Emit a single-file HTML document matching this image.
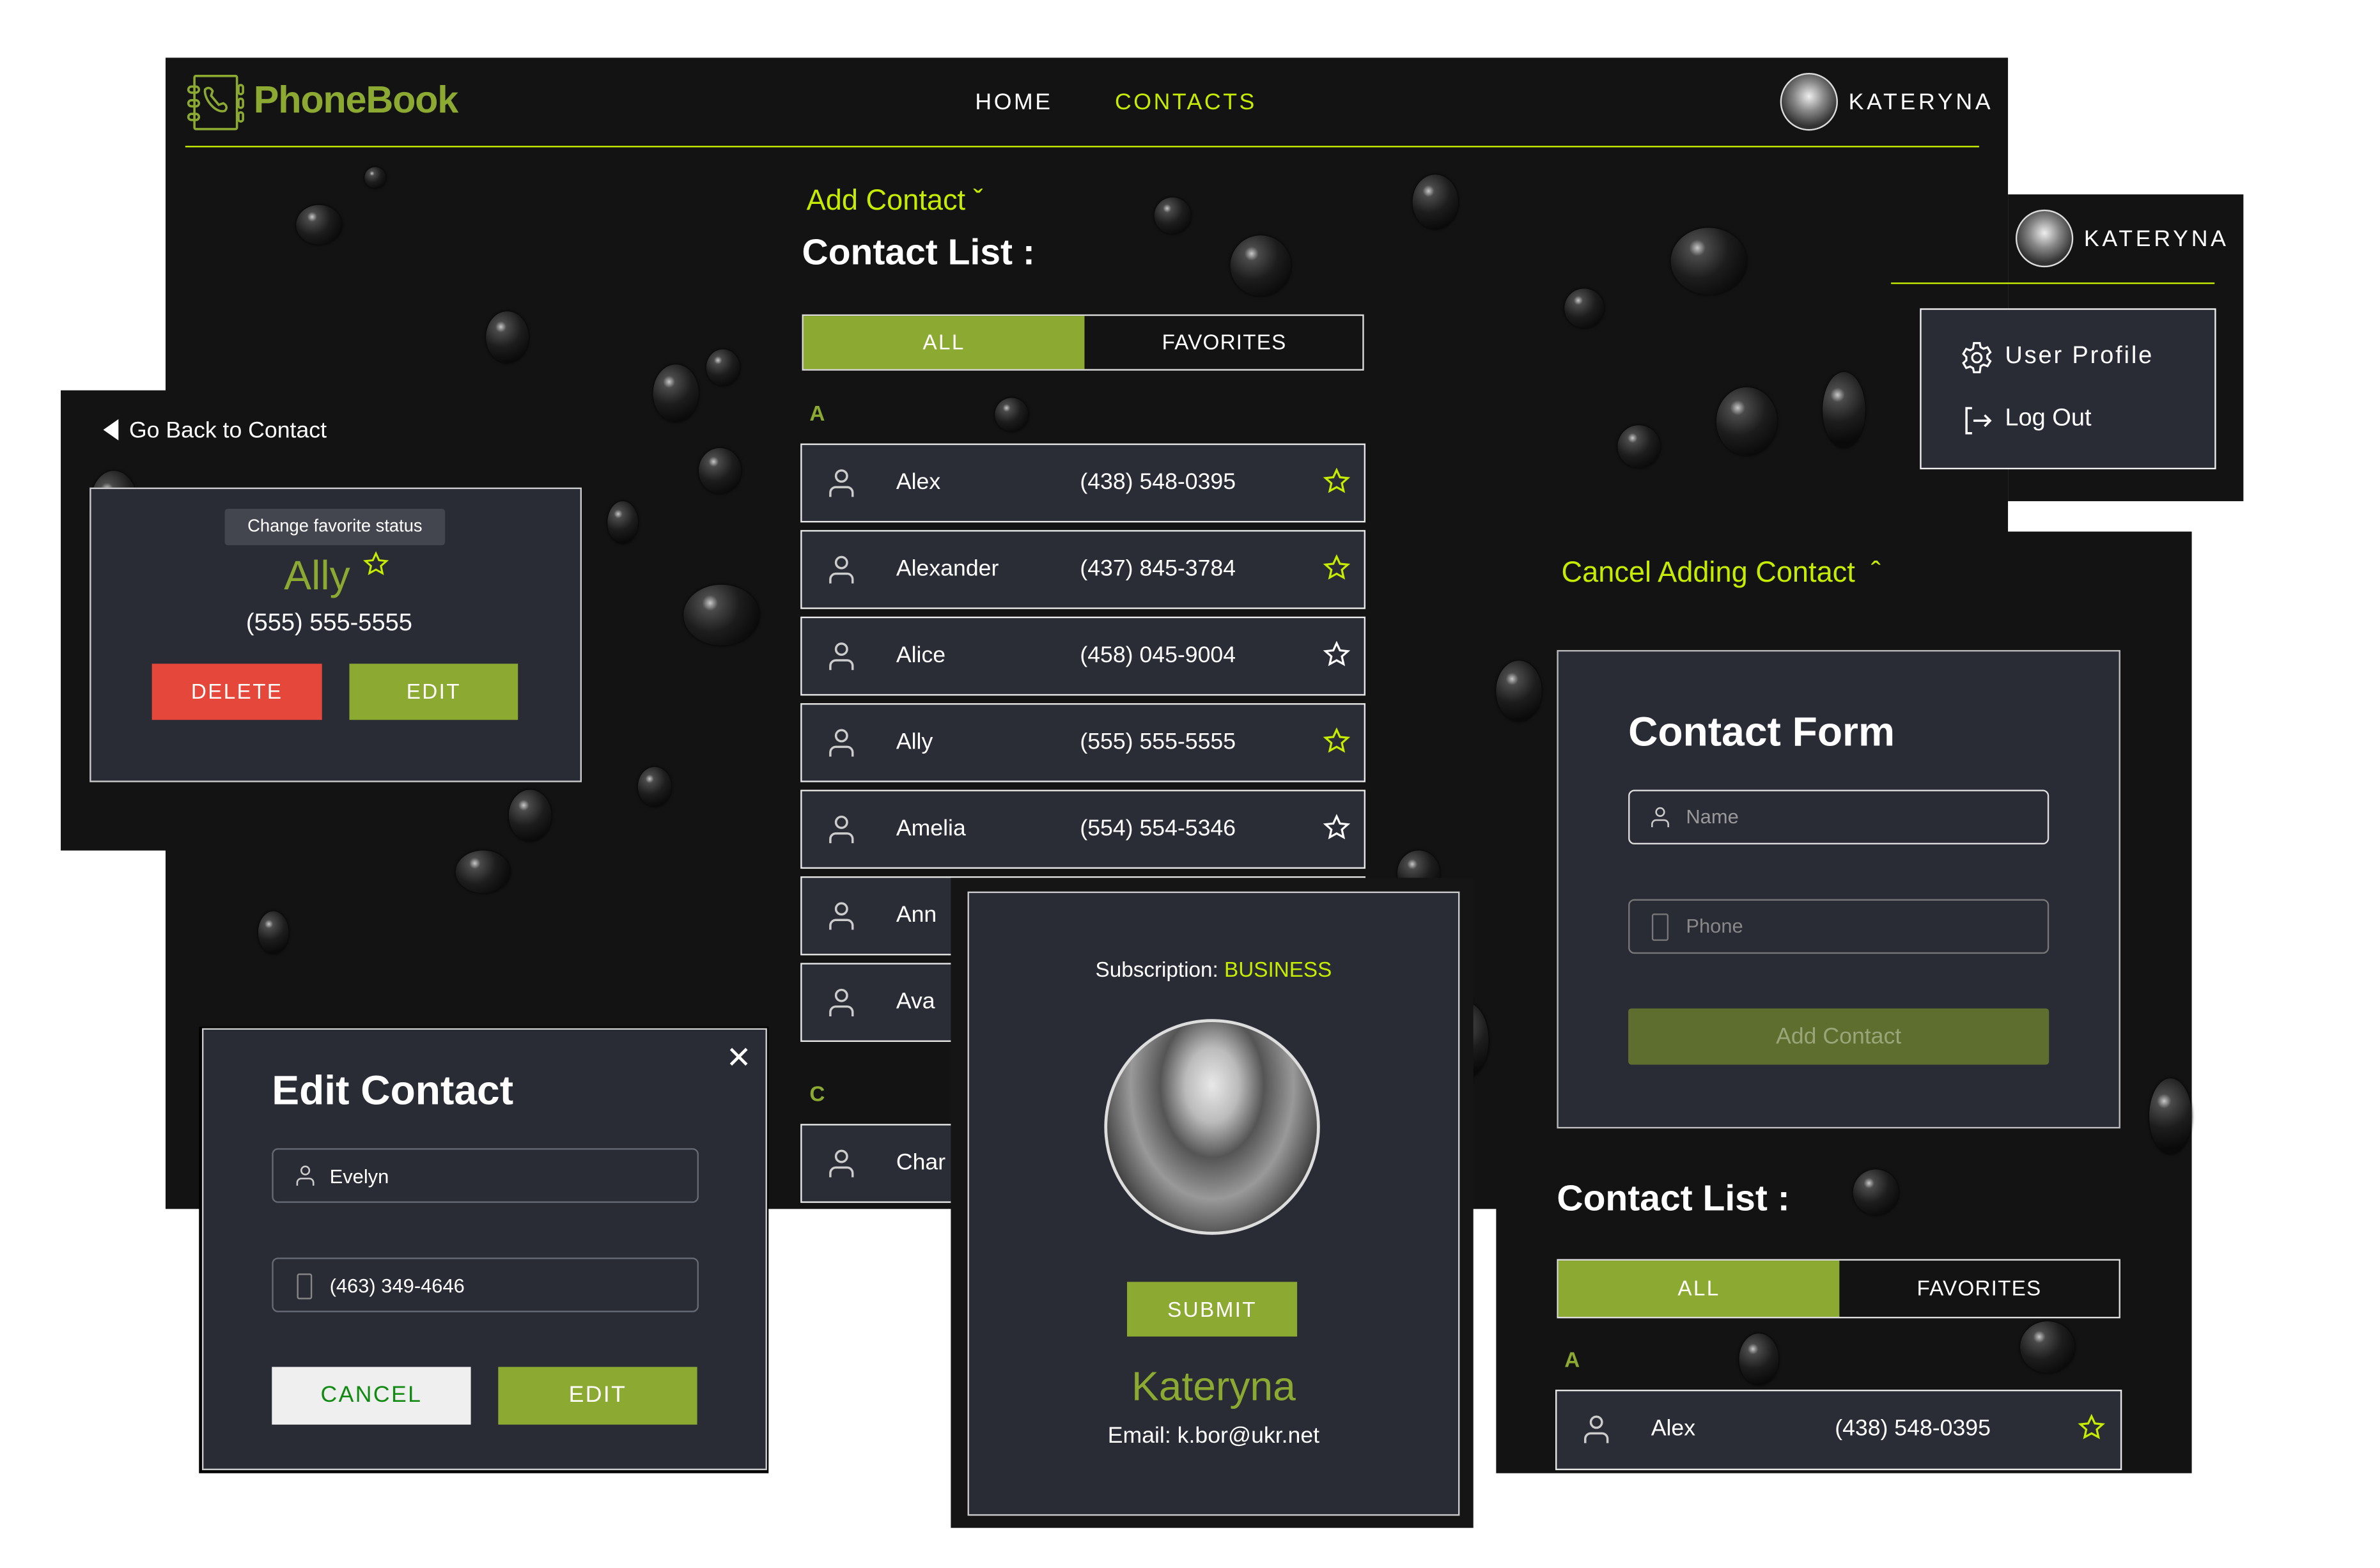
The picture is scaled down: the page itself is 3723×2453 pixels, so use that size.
<!DOCTYPE html>
<html><head><meta charset="utf-8"><style>
html,body{margin:0;padding:0;background:#fff;overflow:hidden}
body{width:3723px;height:2453px;position:relative}
#s{position:absolute;left:0;top:0;width:1570px;height:1035px;transform:scale(2.376);transform-origin:0 0;font-family:"Liberation Sans","DejaVu Sans",sans-serif;color:#fff}
.a{position:absolute}
.bg{background:#131313}
.card{background:#292b35;border:1px solid #d8d8d8;box-sizing:border-box}
.row{position:absolute;left:527px;width:372px;height:52px;background:#2a2c36;border:1px solid #e8e8e8;box-sizing:border-box;font-size:15px}
.row .n{position:absolute;left:62px;top:16px}
.row .p{position:absolute;left:183px;top:16px}
.row svg.u{position:absolute;left:15px;top:14px}
.row svg.st{position:absolute;left:343px;top:15px}
.lime{color:#c6ec00}
.btn{position:absolute;text-align:center;font-size:14px;letter-spacing:1px}
.drop{position:absolute;border-radius:50%;background:radial-gradient(circle at 35% 30%,#c8c8c8 0,#4a4a4a 12%,#1d1d1d 45%,#0a0a0a 80%);box-shadow:0 0 2px #000}
.inp{position:absolute;border:1px solid #666a74;border-radius:4px;box-sizing:border-box;font-size:13px}
</style></head><body><div id="s">

<div class="a bg" style="left:109px;top:38px;width:1213px;height:758px"></div>
<div class="a bg" style="left:1322px;top:128px;width:155px;height:202px"></div>
<div class="a bg" style="left:985px;top:350px;width:458px;height:620px"></div>
<div class="a bg" style="left:40px;top:257px;width:343px;height:303px"></div>

<div class="drop" style="left:195px;top:135px;width:30px;height:26px"></div>
<div class="drop" style="left:320px;top:205px;width:28px;height:34px"></div>
<div class="drop" style="left:430px;top:240px;width:30px;height:38px"></div>
<div class="drop" style="left:460px;top:295px;width:28px;height:30px"></div>
<div class="drop" style="left:450px;top:385px;width:50px;height:40px"></div>
<div class="drop" style="left:400px;top:330px;width:20px;height:28px"></div>
<div class="drop" style="left:335px;top:520px;width:28px;height:34px"></div>
<div class="drop" style="left:240px;top:110px;width:14px;height:14px"></div>
<div class="drop" style="left:465px;top:230px;width:22px;height:24px"></div>
<div class="drop" style="left:655px;top:262px;width:22px;height:22px"></div>
<div class="drop" style="left:760px;top:130px;width:24px;height:24px"></div>
<div class="drop" style="left:810px;top:155px;width:40px;height:40px"></div>
<div class="drop" style="left:930px;top:115px;width:30px;height:36px"></div>
<div class="drop" style="left:1100px;top:150px;width:50px;height:44px"></div>
<div class="drop" style="left:1030px;top:190px;width:26px;height:26px"></div>
<div class="drop" style="left:1130px;top:255px;width:40px;height:45px"></div>
<div class="drop" style="left:1200px;top:245px;width:28px;height:50px"></div>
<div class="drop" style="left:1065px;top:280px;width:28px;height:28px"></div>
<div class="drop" style="left:1125px;top:520px;width:28px;height:30px"></div>
<div class="drop" style="left:985px;top:435px;width:30px;height:40px"></div>
<div class="drop" style="left:1415px;top:710px;width:28px;height:50px"></div>
<div class="drop" style="left:1145px;top:878px;width:26px;height:34px"></div>
<div class="drop" style="left:1330px;top:870px;width:36px;height:34px"></div>
<div class="drop" style="left:1220px;top:770px;width:30px;height:30px"></div>
<div class="drop" style="left:950px;top:660px;width:30px;height:50px"></div>
<div class="drop" style="left:920px;top:560px;width:28px;height:30px"></div>
<div class="drop" style="left:420px;top:505px;width:22px;height:26px"></div>
<div class="drop" style="left:300px;top:560px;width:36px;height:28px"></div>
<div class="drop" style="left:170px;top:600px;width:20px;height:28px"></div>
<div class="drop" style="left:60px;top:310px;width:30px;height:40px"></div>

<svg class="a" style="left:122px;top:48px" width="40" height="40" viewBox="0 0 40 40" fill="none" stroke="#8caa32" stroke-width="1.5"><rect x="6" y="2" width="28" height="35" rx="1"/><rect x="2" y="9" width="7" height="4" rx="2"/><rect x="2" y="18" width="7" height="4" rx="2"/><rect x="2" y="27" width="7" height="4" rx="2"/><rect x="35" y="8" width="3" height="6" rx="1.5"/><rect x="35" y="17" width="3" height="6" rx="1.5"/><rect x="35" y="26" width="3" height="6" rx="1.5"/><path d="M13 11c2-2 4-1 5 1l-1 3 5 6 3-1c2 1 3 3 1 5-6 2-14-8-13-14z"/></svg>
<div class="a" style="left:167px;top:52px;font-size:25px;font-weight:bold;color:#8caa32;letter-spacing:-0.5px">PhoneBook</div>
<div class="a" style="left:642px;top:59px;font-size:15px;letter-spacing:1.5px">HOME</div>
<div class="a lime" style="left:734px;top:59px;font-size:15px;letter-spacing:1.5px">CONTACTS</div>
<div class="a" style="left:1172px;top:48px;width:36px;height:36px;border-radius:50%;background:radial-gradient(circle at 50% 40%,#eee 0,#888 35%,#333 70%);border:1px solid #ddd"></div>
<div class="a" style="left:1217px;top:59px;font-size:15px;letter-spacing:2px">KATERYNA</div>
<div class="a" style="left:122px;top:96px;width:1181px;height:1px;background:#c6ec00"></div>

<div class="a lime" style="left:531px;top:122px;font-size:19px">Add Contact &#711;</div>
<div class="a" style="left:528px;top:153px;font-size:24px;font-weight:bold">Contact List :</div>
<div class="a" style="left:528px;top:207px;width:370px;height:37px;border:1px solid #ddd;box-sizing:border-box;background:#131313"></div>
<div class="btn" style="left:529px;top:208px;width:185px;height:35px;line-height:35px;background:#8caa32">ALL</div>
<div class="btn" style="left:714px;top:208px;width:184px;height:35px;line-height:35px;letter-spacing:0.5px">FAVORITES</div>
<div class="a" style="left:533px;top:264px;font-size:14px;font-weight:bold;color:#8caa32">A</div>

<svg width="0" height="0" style="position:absolute"><defs>
<symbol id="usr" viewBox="0 0 24 24"><circle cx="12" cy="7" r="4" fill="none" stroke="#ccc" stroke-width="1.6"/><path d="M4 22v-3a4 4 0 0 1 4-4h8a4 4 0 0 1 4 4v3" fill="none" stroke="#ccc" stroke-width="1.6"/></symbol>
<symbol id="star" viewBox="0 0 24 24"><path d="M12 2l2.9 6.3 6.9.7-5.2 4.6 1.5 6.8L12 17l-6.1 3.4 1.5-6.8L2.2 9l6.9-.7z" fill="none" stroke="#c6ec00" stroke-width="1.8"/></symbol>
<symbol id="starw" viewBox="0 0 24 24"><path d="M12 2l2.9 6.3 6.9.7-5.2 4.6 1.5 6.8L12 17l-6.1 3.4 1.5-6.8L2.2 9l6.9-.7z" fill="none" stroke="#fff" stroke-width="1.8"/></symbol>
</defs></svg>

<div class="row" style="top:292px"><svg class="u" width="22" height="22"><use href="#usr"/></svg><span class="n">Alex</span><span class="p">(438) 548-0395</span><svg class="st" width="18" height="18"><use href="#star"/></svg></div>
<div class="row" style="top:349px"><svg class="u" width="22" height="22"><use href="#usr"/></svg><span class="n">Alexander</span><span class="p">(437) 845-3784</span><svg class="st" width="18" height="18"><use href="#star"/></svg></div>
<div class="row" style="top:406px"><svg class="u" width="22" height="22"><use href="#usr"/></svg><span class="n">Alice</span><span class="p">(458) 045-9004</span><svg class="st" width="18" height="18"><use href="#starw"/></svg></div>
<div class="row" style="top:463px"><svg class="u" width="22" height="22"><use href="#usr"/></svg><span class="n">Ally</span><span class="p">(555) 555-5555</span><svg class="st" width="18" height="18"><use href="#star"/></svg></div>
<div class="row" style="top:520px"><svg class="u" width="22" height="22"><use href="#usr"/></svg><span class="n">Amelia</span><span class="p">(554) 554-5346</span><svg class="st" width="18" height="18"><use href="#starw"/></svg></div>
<div class="row" style="top:577px"><svg class="u" width="22" height="22"><use href="#usr"/></svg><span class="n">Ann</span></div>
<div class="row" style="top:634px"><svg class="u" width="22" height="22"><use href="#usr"/></svg><span class="n">Ava</span></div>
<div class="a" style="left:533px;top:712px;font-size:14px;font-weight:bold;color:#8caa32">C</div>
<div class="row" style="top:740px;height:52px"><svg class="u" width="22" height="22"><use href="#usr"/></svg><span class="n">Char</span></div>

<div class="a" style="left:1327px;top:138px;width:36px;height:36px;border-radius:50%;background:radial-gradient(circle at 50% 40%,#eee 0,#888 35%,#333 70%);border:1px solid #ddd"></div>
<div class="a" style="left:1372px;top:149px;font-size:15px;letter-spacing:2px">KATERYNA</div>
<div class="a" style="left:1245px;top:186px;width:213px;height:1px;background:#c6ec00"></div>
<div class="a card" style="left:1264px;top:203px;width:195px;height:106px;border-color:#eee"></div>
<svg class="a" style="left:1290px;top:224px" width="23" height="23" viewBox="0 0 24 24" fill="none" stroke="#fff" stroke-width="1.4"><circle cx="12" cy="12" r="3.2"/><path d="M10 2h4l.6 2.8 2 1.1 2.7-1 2 3.4-2.1 1.9v2.3l2.1 1.9-2 3.4-2.7-1-2 1.1L14 22h-4l-.6-2.8-2-1.1-2.7 1-2-3.4 2.1-1.9v-2.3L2.7 9.4l2-3.4 2.7 1 2-1.1z"/></svg>
<div class="a" style="left:1320px;top:226px;font-size:16px;letter-spacing:1.2px">User Profile</div>
<svg class="a" style="left:1291px;top:266px" width="22" height="22" viewBox="0 0 24 24" fill="none" stroke="#fff" stroke-width="1.6"><path d="M8 3H4v18h4M9 12h12M17 8l4 4-4 4"/></svg>
<div class="a" style="left:1320px;top:267px;font-size:16px">Log Out</div>

<div class="a lime" style="left:1028px;top:367px;font-size:19px">Cancel Adding Contact &nbsp;&#710;</div>
<div class="a card" style="left:1025px;top:428px;width:371px;height:315px;border-color:#bbb"></div>
<div class="a" style="left:1072px;top:467px;font-size:27px;font-weight:bold">Contact Form</div>
<div class="inp" style="left:1072px;top:520px;width:277px;height:36px;border-color:#ddd;border-width:1.5px"><svg class="a" style="left:12px;top:9px" width="16" height="16"><use href="#usr"/></svg><span class="a" style="left:37px;top:9px;color:#999">Name</span></div>
<div class="inp" style="left:1072px;top:592px;width:277px;height:36px;border-color:#777"><svg class="a" style="left:14px;top:8px" width="12" height="19" viewBox="0 0 12 19" fill="none" stroke="#777"><rect x="1" y="1" width="10" height="17" rx="1"/></svg><span class="a" style="left:37px;top:9px;color:#888">Phone</span></div>
<div class="btn" style="left:1072px;top:664px;width:277px;height:37px;line-height:37px;background:#5e6e2e;color:#9aa57a;border-radius:2px;letter-spacing:0;font-size:15px">Add Contact</div>
<div class="a" style="left:1025px;top:776px;font-size:24px;font-weight:bold">Contact List :</div>
<div class="a" style="left:1025px;top:829px;width:371px;height:39px;border:1px solid #ddd;box-sizing:border-box;background:#131313"></div>
<div class="btn" style="left:1026px;top:830px;width:185px;height:37px;line-height:37px;background:#8caa32">ALL</div>
<div class="btn" style="left:1211px;top:830px;width:184px;height:37px;line-height:37px;letter-spacing:0.5px">FAVORITES</div>
<div class="a" style="left:1030px;top:887px;font-size:14px;font-weight:bold;color:#8caa32">A</div>
<div class="row" style="left:1024px;top:915px;width:373px;height:53px"><svg class="u" width="22" height="22"><use href="#usr"/></svg><span class="n">Alex</span><span class="p">(438) 548-0395</span><svg class="st" width="18" height="18"><use href="#star"/></svg></div>

<div class="a" style="left:68px;top:276px;width:0;height:0;border-top:7px solid transparent;border-bottom:7px solid transparent;border-right:10px solid #fff"></div>
<div class="a" style="left:85px;top:275px;font-size:15px">Go Back to Contact</div>
<div class="a card" style="left:59px;top:321px;width:324px;height:194px;border-color:#ccc"></div>
<div class="a" style="left:148px;top:335px;width:145px;height:24px;background:#44464f;border-radius:2px;font-size:11.5px;line-height:24px;text-align:center">Change favorite status</div>
<div class="a" style="left:187px;top:364px;font-size:27px;color:#8caa32">Ally</div>
<svg class="a" style="left:239px;top:363px" width="17" height="17"><use href="#star"/></svg>
<div class="a" style="left:162px;top:402px;font-size:16px">(555) 555-5555</div>
<div class="btn" style="left:100px;top:437px;width:112px;height:37px;line-height:37px;background:#e5473a">DELETE</div>
<div class="btn" style="left:230px;top:437px;width:111px;height:37px;line-height:37px;background:#8caa32">EDIT</div>

<div class="a" style="left:131px;top:676px;width:375px;height:294px;background:#000"></div>
<div class="a card" style="left:133px;top:677px;width:372px;height:291px;border-color:#ccc"></div>
<div class="a" style="left:478px;top:684px;font-size:20px;font-weight:bold">✕</div>
<div class="a" style="left:179px;top:703px;font-size:27px;font-weight:bold">Edit Contact</div>
<div class="inp" style="left:179px;top:756px;width:281px;height:36px"><svg class="a" style="left:13px;top:9px" width="16" height="16"><use href="#usr"/></svg><span class="a" style="left:37px;top:10px">Evelyn</span></div>
<div class="inp" style="left:179px;top:828px;width:281px;height:36px"><svg class="a" style="left:15px;top:9px" width="11" height="18" viewBox="0 0 11 18" fill="none" stroke="#888"><rect x="1" y="1" width="9" height="16" rx="1"/></svg><span class="a" style="left:37px;top:10px">(463) 349-4646</span></div>
<div class="btn" style="left:179px;top:900px;width:131px;height:38px;line-height:38px;background:#efefef;color:#118a11;font-size:15px">CANCEL</div>
<div class="btn" style="left:328px;top:900px;width:131px;height:38px;line-height:38px;background:#8caa32;font-size:15px">EDIT</div>

<div class="a" style="left:626px;top:578px;width:344px;height:428px;background:#151515"></div>
<div class="a card" style="left:637px;top:587px;width:324px;height:411px;border-color:#ccc"></div>
<div class="a" style="left:637px;top:630px;width:324px;text-align:center;font-size:14px">Subscription: <span class="lime">BUSINESS</span></div>
<div class="a" style="left:727px;top:671px;width:142px;height:142px;border-radius:50%;border:2px solid #ddd;box-sizing:border-box;background:radial-gradient(ellipse at 50% 30%,#e8e8e8 0,#bbb 18%,#555 35%,#999 55%,#333 80%,#222 100%)"></div>
<div class="btn" style="left:742px;top:844px;width:112px;height:36px;line-height:36px;background:#8caa32;font-size:14px">SUBMIT</div>
<div class="a" style="left:637px;top:898px;width:324px;text-align:center;font-size:27px;color:#8caa32">Kateryna</div>
<div class="a" style="left:637px;top:937px;width:324px;text-align:center;font-size:15px">Email: k.bor@ukr.net</div>

</div></body></html>
